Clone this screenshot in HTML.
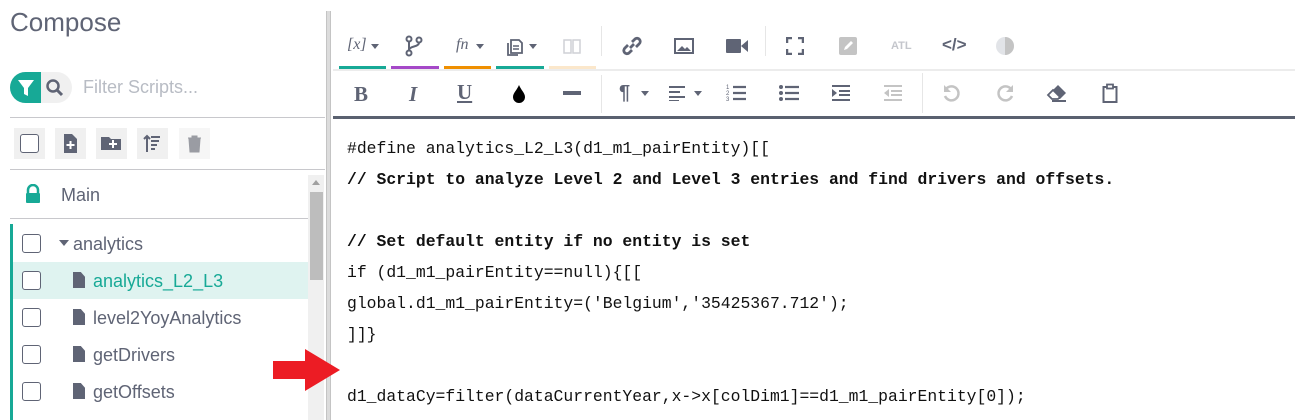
<!DOCTYPE html>
<html><head><style>
*{margin:0;padding:0;box-sizing:border-box}
body{width:1295px;height:420px;overflow:hidden;background:#fff;font-family:"Liberation Sans",sans-serif;position:relative;color:#5f6475}
.a{position:absolute}
.btn{position:absolute;width:31px;height:31px;background:#f0f0f0;top:128px}
.cb{position:absolute;width:19px;height:19px;border:1.5px solid #5f6475;border-radius:3px;background:#fff}
.row{position:absolute;left:13px;width:295px;height:37px}
.row span{position:absolute;top:9px;font-size:18px}
.fi{position:absolute;top:10px;width:12px;height:16px;background:#5f6475;clip-path:polygon(0 0,65% 0,100% 30%,100% 100%,0 100%)}
.code{position:absolute;left:347px;font-family:"Liberation Mono",monospace;font-size:16.4px;color:#111;white-space:pre}
.b{font-weight:bold}
.ul{position:absolute;top:66px;height:3px}
.ic{position:absolute;color:#5f6475;font-size:18px;font-weight:bold}
</style></head><body>
<div class="a" style="left:10px;top:7px;font-size:26px;color:#5f6475">Compose</div>
<div class="a" style="left:10px;top:72px;width:62px;height:31px;border-radius:16px;background:#f0f0f0"></div>
<div class="a" style="left:10px;top:72px;width:31px;height:31px;border-radius:16px 0 0 16px;background:#17a996"></div>
<svg class="a" style="left:17px;top:78px" width="18" height="20"><path d="M1 2h16l-6 8v8l-4-2v-6z" fill="#fff"/></svg>
<svg class="a" style="left:45px;top:78px" width="20" height="20"><circle cx="8" cy="8" r="5.5" fill="none" stroke="#5f6475" stroke-width="2.5"/><path d="M12 12l5 5" stroke="#5f6475" stroke-width="3"/></svg>
<div class="a" style="left:83px;top:77px;font-size:18px;color:#b8bcc4">Filter Scripts...</div>
<div class="a" style="left:10px;top:117px;width:315px;height:1px;background:#c8c8cc"></div>
<div class="btn" style="left:14px"><div class="cb" style="left:6px;top:6px"></div></div>
<div class="btn" style="left:55px"><svg width="31" height="31"><path d="M9 6h8l5 5v14H9z" fill="#5f6475"/><path d="M15.5 13v8M11.5 17h8" stroke="#fff" stroke-width="2"/></svg></div>
<div class="btn" style="left:96px"><svg width="31" height="31"><path d="M5 9h8l2 2h10v11H5z" fill="#5f6475"/><path d="M17 12v8M13 16h8" stroke="#fff" stroke-width="2"/></svg></div>
<div class="btn" style="left:137px"><svg width="31" height="31"><path d="M10 24V8M7 11l3-3 3 3M14 9h9M14 13h8M14 17h6M14 21h4" stroke="#5f6475" stroke-width="2" fill="none"/></svg></div>
<div class="btn" style="left:179px;background:#f6f6f6"><svg width="31" height="31"><path d="M9 10h13M13 10V8h5v2M10 11h11l-1 13h-9z" fill="#9a9ca3" stroke="#9a9ca3" stroke-width="1"/></svg></div>
<div class="a" style="left:10px;top:169px;width:315px;height:1px;background:#c8c8cc"></div>
<svg class="a" style="left:24px;top:184px" width="18" height="20"><path d="M4 9V6a5 5 0 0110 0v3" fill="none" stroke="#17a996" stroke-width="2.5"/><rect x="2" y="9" width="14" height="10" rx="1" fill="#17a996"/></svg>
<div class="a" style="left:61px;top:185px;font-size:18px">Main</div>
<div class="a" style="left:10px;top:218px;width:298px;height:1px;background:#c8c8cc"></div>
<div class="a" style="left:308px;top:175px;width:16px;height:245px;background:#f0f0f0"></div>
<div class="a" style="left:310px;top:192px;width:13px;height:88px;background:#bdbdbd"></div>
<div class="a" style="left:312px;top:180px;width:0;height:0;border:4px solid transparent;border-bottom:5px solid #a0a0a0;border-top:0"></div>
<div class="a" style="left:10px;top:224px;width:3px;height:196px;background:#17a996"></div>
<div class="row" style="top:225px"><div class="cb" style="left:9px;top:9px"></div><div class="a" style="left:46px;top:15px;border:5px solid transparent;border-top:6px solid #5f6475;border-bottom:0"></div><span style="left:60px">analytics</span></div>
<div class="row" style="top:262px;background:#dff3f0"><div class="cb" style="left:9px;top:9px"></div><div class="fi" style="left:60px"></div><span style="left:80px;color:#17a996">analytics_L2_L3</span></div>
<div class="row" style="top:299px"><div class="cb" style="left:9px;top:9px"></div><div class="fi" style="left:60px"></div><span style="left:80px">level2YoyAnalytics</span></div>
<div class="row" style="top:336px"><div class="cb" style="left:9px;top:9px"></div><div class="fi" style="left:60px"></div><span style="left:80px">getDrivers</span></div>
<div class="row" style="top:373px"><div class="cb" style="left:9px;top:9px"></div><div class="fi" style="left:60px"></div><span style="left:80px">getOffsets</span></div>
<div class="a" style="left:326px;top:11px;width:5px;height:409px;background:#dcdcdc;border-left:1px solid #c4c4c4;border-right:1px solid #c4c4c4"></div>
<div class="a" style="left:333px;top:69px;width:962px;height:2px;background:#ececec"></div>
<div class="a" style="left:333px;top:116px;width:962px;height:3px;background:#5a6170"></div>
<div class="ul" style="left:339px;width:47px;background:#17a996"></div>
<div class="ul" style="left:391px;width:48px;background:#a548c8"></div>
<div class="ul" style="left:444px;width:47px;background:#ef8f00"></div>
<div class="ul" style="left:496px;width:48px;background:#17a996"></div>
<div class="ul" style="left:549px;width:47px;background:#fbe7cb"></div>
<div class="a" style="left:601px;top:26px;width:1px;height:30px;background:#e6e6e6"></div>
<div class="a" style="left:765px;top:26px;width:1px;height:30px;background:#e6e6e6"></div>
<div class="a" style="left:601px;top:75px;width:1px;height:38px;background:#e6e6e6"></div>
<div class="a" style="left:922px;top:73px;width:1px;height:40px;background:#e6e6e6"></div>
<div class="ic" style="left:347px;top:36px;font-size:16px;font-style:italic;font-weight:normal;font-family:'Liberation Serif',serif">[x]</div>
<div class="a" style="left:371px;top:44px;border:4px solid transparent;border-top:5px solid #5f6475;border-bottom:0"></div>
<svg class="a" style="left:405px;top:35px" width="18" height="22"><circle cx="4" cy="4" r="2.5" fill="none" stroke="#5f6475" stroke-width="2"/><circle cx="4" cy="18" r="2.5" fill="none" stroke="#5f6475" stroke-width="2"/><circle cx="14" cy="5" r="2.5" fill="none" stroke="#5f6475" stroke-width="2"/><path d="M4 6.5v9M14 7.5c0 5-10 3-10 8" fill="none" stroke="#5f6475" stroke-width="2"/></svg>
<div class="ic" style="left:456px;top:36px;font-size:16px;font-style:italic;font-weight:normal;font-family:'Liberation Serif',serif">fn</div>
<div class="a" style="left:476px;top:44px;border:4px solid transparent;border-top:5px solid #5f6475;border-bottom:0"></div>
<svg class="a" style="left:506px;top:37px" width="18" height="20"><path d="M5 3h8l3 3v10H5z" fill="none" stroke="#5f6475" stroke-width="1.8"/><path d="M2 6v12h10" fill="none" stroke="#5f6475" stroke-width="1.8"/><path d="M7 9h6M7 12h6" stroke="#5f6475" stroke-width="1.5"/></svg>
<div class="a" style="left:529px;top:44px;border:4px solid transparent;border-top:5px solid #5f6475;border-bottom:0"></div>
<svg class="a" style="left:563px;top:38px" width="18" height="16"><path d="M1 2h7v13H1zM10 2h7v13h-7z" fill="none" stroke="#cfd1d5" stroke-width="1.5"/></svg>
<svg class="a" style="left:621px;top:35px" width="22" height="22"><path d="M9 13l4-4M7 10l-3 3a3 3 0 004 5l3-3M15 12l3-3a3 3 0 00-4-5l-3 3" fill="none" stroke="#5f6475" stroke-width="2.8"/></svg>
<svg class="a" style="left:674px;top:38px" width="20" height="16"><rect x="1" y="1" width="18" height="14" fill="none" stroke="#5f6475" stroke-width="2"/><path d="M3 13l5-5 3 3 2-2 4 4z" fill="#5f6475"/></svg>
<svg class="a" style="left:726px;top:38px" width="24" height="16"><rect x="0" y="1" width="15" height="14" rx="1" fill="#5f6475"/><path d="M15 8l7-6v12z" fill="#5f6475"/></svg>
<svg class="a" style="left:786px;top:37px" width="18" height="18"><path d="M1 6V1h5M12 1h5v5M17 12v5h-5M6 17H1v-5" fill="none" stroke="#5f6475" stroke-width="2.5"/></svg>
<svg class="a" style="left:839px;top:37px" width="18" height="18"><rect width="18" height="18" rx="2" fill="#c4c4c4"/><path d="M5 13l1-3 6-6 2 2-6 6z" fill="#fff"/></svg>
<div class="a" style="left:891px;top:40px;font-size:11px;font-weight:bold;color:#c4c6cc">ATL</div>
<div class="ic" style="left:942px;top:35px;font-size:17px">&lt;/&gt;</div>
<svg class="a" style="left:995px;top:36px" width="20" height="20"><circle cx="10" cy="10" r="9" fill="#e2e4e8"/><path d="M10 1a9 9 0 010 18z" fill="#c4c4c4"/></svg>
<div class="ic" style="left:354px;top:82px;font-size:21px;font-family:'Liberation Serif',serif">B</div>
<div class="ic" style="left:409px;top:82px;font-size:21px;font-style:italic;font-family:'Liberation Serif',serif">I</div>
<div class="ic" style="left:457px;top:80px;font-size:21px;font-family:'Liberation Serif',serif;text-decoration:underline">U</div>
<svg class="a" style="left:511px;top:84px" width="16" height="20"><path d="M8 1C6 6 2 9 2 13a6 6 0 0012 0c0-4-4-7-6-12z" fill="#000"/></svg>
<div class="a" style="left:563px;top:91px;width:18px;height:4px;background:#5f6475"></div>
<div class="ic" style="left:619px;top:82px;font-size:20px">¶</div>
<div class="a" style="left:641px;top:91px;border:4px solid transparent;border-top:5px solid #5f6475;border-bottom:0"></div>
<svg class="a" style="left:669px;top:85px" width="18" height="16"><path d="M0 2h16M0 7h11M0 12h16M0 16h10" stroke="#5f6475" stroke-width="2"/></svg>
<div class="a" style="left:694px;top:91px;border:4px solid transparent;border-top:5px solid #5f6475;border-bottom:0"></div>
<svg class="a" style="left:726px;top:84px" width="20" height="18"><path d="M7 3h13M7 9h13M7 15h13" stroke="#5f6475" stroke-width="2.2"/><text x="0" y="5" font-size="6" fill="#5f6475">1</text><text x="0" y="11" font-size="6" fill="#5f6475">2</text><text x="0" y="17" font-size="6" fill="#5f6475">3</text></svg>
<svg class="a" style="left:779px;top:84px" width="20" height="18"><circle cx="2" cy="3" r="2" fill="#5f6475"/><circle cx="2" cy="9" r="2" fill="#5f6475"/><circle cx="2" cy="15" r="2" fill="#5f6475"/><path d="M6 3h14M6 9h14M6 15h14" stroke="#5f6475" stroke-width="2.2"/></svg>
<svg class="a" style="left:832px;top:84px" width="18" height="18"><path d="M0 2h18M7 7h11M7 11h11M0 16h18" stroke="#5f6475" stroke-width="2"/><path d="M0 5l5 4-5 4z" fill="#5f6475"/></svg>
<svg class="a" style="left:884px;top:84px" width="18" height="18"><path d="M0 2h18M7 7h11M7 11h11M0 16h18" stroke="#c4c4c4" stroke-width="2"/><path d="M5 5L0 9l5 4z" fill="#c4c4c4"/></svg>
<svg class="a" style="left:942px;top:83px" width="20" height="20"><path d="M4 6a7 7 0 11-1 7" fill="none" stroke="#c4c4c4" stroke-width="2.5"/><path d="M2 2v7h7" fill="#c4c4c4"/></svg>
<svg class="a" style="left:995px;top:83px" width="20" height="20"><path d="M16 6a7 7 0 10 1 7" fill="none" stroke="#c4c4c4" stroke-width="2.5"/><path d="M18 2v7h-7z" fill="#c4c4c4"/></svg>
<svg class="a" style="left:1046px;top:84px" width="22" height="18"><path d="M12 1l8 8-6 6H6l-4-4z" fill="#5f6475"/><path d="M2 11l5-5 7 7-2 2H6z" fill="#fff" stroke="#5f6475" stroke-width="1.8"/><path d="M6 17h14" stroke="#5f6475" stroke-width="2"/></svg>
<svg class="a" style="left:1102px;top:83px" width="16" height="20"><rect x="1.5" y="4" width="13" height="15" fill="none" stroke="#5f6475" stroke-width="2"/><rect x="5" y="1.5" width="6" height="4" fill="#fff" stroke="#5f6475" stroke-width="1.8"/></svg>
<div class="code" style="top:139px">#define analytics_L2_L3(d1_m1_pairEntity)[[</div>
<div class="code b" style="top:170px">// Script to analyze Level 2 and Level 3 entries and find drivers and offsets.</div>
<div class="code b" style="top:232px">// Set default entity if no entity is set</div>
<div class="code" style="top:263px">if (d1_m1_pairEntity==null){[[</div>
<div class="code" style="top:294px">global.d1_m1_pairEntity=('Belgium','35425367.712');</div>
<div class="code" style="top:325px">]]}</div>
<div class="code" style="top:387px">d1_dataCy=filter(dataCurrentYear,x-&gt;x[colDim1]==d1_m1_pairEntity[0]);</div>
<svg class="a" style="left:272px;top:348px" width="70" height="46"><path d="M1 13h32V1l35 21-35 21V31H1z" fill="#ec1c24"/></svg>
</body></html>
